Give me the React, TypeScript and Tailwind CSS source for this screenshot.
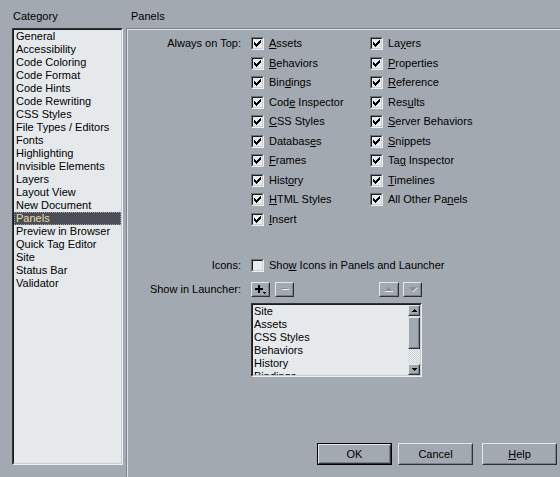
import React from "react";

const CATEGORIES = [
  "General",
  "Accessibility",
  "Code Coloring",
  "Code Format",
  "Code Hints",
  "Code Rewriting",
  "CSS Styles",
  "File Types / Editors",
  "Fonts",
  "Highlighting",
  "Invisible Elements",
  "Layers",
  "Layout View",
  "New Document",
  "Panels",
  "Preview in Browser",
  "Quick Tag Editor",
  "Site",
  "Status Bar",
  "Validator",
];

// "&" marks the mnemonic letter
const LEFT_PANELS = [
  "&Assets",
  "&Behaviors",
  "Bin&dings",
  "Cod&e Inspector",
  "&CSS Styles",
  "Databas&es",
  "&Frames",
  "Hist&ory",
  "&HTML Styles",
  "&Insert",
];

const RIGHT_PANELS = [
  "La&yers",
  "&Properties",
  "&Reference",
  "Res&ults",
  "&Server Behaviors",
  "&Snippets",
  "Ta&g Inspector",
  "&Timelines",
  "All Other Pa&nels",
];

const LAUNCHER = ["Site", "Assets", "CSS Styles", "Behaviors", "History", "Bindings"];

function Mnemonic({ text }: { text: string }) {
  const i = text.indexOf("&");
  if (i < 0) return <>{text}</>;
  return (
    <>
      {text.slice(0, i)}
      <span className="underline underline-offset-[1px]">{text[i + 1]}</span>
      {text.slice(i + 2)}
    </>
  );
}

function CheckBox({ on }: { on: boolean }) {
  return (
    <span className="flex h-[13px] w-[13px] shrink-0 border border-t-[#6a7178] border-l-[#6a7178] border-r-[#eef1f3] border-b-[#eef1f3]">
      <span className="flex flex-1 items-center justify-center border border-t-[#1c1f22] border-l-[#1c1f22] border-r-[#c9ced2] border-b-[#c9ced2] bg-[#e8ecee]">
        {on && (
          <svg width="7" height="7" viewBox="0 0 7 7" shapeRendering="crispEdges">
            <path
              fill="#000"
              d="M6 0h1v1h-1z M5 1h2v1h-2z M0 2h1v1h-1z M4 2h3v1h-3z M0 3h2v1h-2z M3 3h3v1h-3z M0 4h5v1h-5z M1 5h3v1h-3z M2 6h1v1h-1z"
            />
          </svg>
        )}
      </span>
    </span>
  );
}

function CheckRow({ label, on = true }: { label: string; on?: boolean }) {
  return (
    <div className="flex h-[19.5px] items-center gap-[5px]">
      <CheckBox on={on} />
      <span className="whitespace-nowrap">
        <Mnemonic text={label} />
      </span>
    </div>
  );
}

function Raised({
  className = "",
  children,
}: {
  className?: string;
  children?: React.ReactNode;
}) {
  return (
    <div
      className={`flex border border-t-[#e3e7ea] border-l-[#e3e7ea] border-r-[#2e3236] border-b-[#2e3236] ${className}`}
    >
      <div className="flex flex-1 items-center justify-center border border-t-transparent border-l-transparent border-r-[#7a8189] border-b-[#7a8189] bg-[#a2a9b0]">
        {children}
      </div>
    </div>
  );
}

function ScrollBar() {
  return (
    <div className="flex w-[12px] shrink-0 flex-col bg-[#e4e8ea] [background-image:repeating-conic-gradient(#c9cfd3_0_25%,#eef1f3_0_50%)] [background-size:2px_2px]">
      <Raised className="h-[11px] w-[12px]">
        <svg width="5" height="3" viewBox="0 0 5 3" shapeRendering="crispEdges">
          <path fill="#000" d="M2 0h1v1h-1z M1 1h3v1h-3z M0 2h5v1h-5z" />
        </svg>
      </Raised>
      <Raised className="mt-px h-[32px] w-[12px]" />
      <div className="flex-1" />
      <Raised className="h-[11px] w-[12px]">
        <svg width="5" height="3" viewBox="0 0 5 3" shapeRendering="crispEdges">
          <path fill="#000" d="M0 0h5v1h-5z M1 1h3v1h-3z M2 2h1v1h-1z" />
        </svg>
      </Raised>
    </div>
  );
}

export default function App() {
  return (
    <div className="flex h-[477px] w-[560px] overflow-hidden bg-[#a2a9b0] text-[11px] leading-[13px] text-black [font-family:'Liberation_Sans',Arial,sans-serif]">
      {/* category list */}
      <div className="flex w-[126px] shrink-0 flex-col pl-3">
        <div className="h-[28px] pl-px pt-[10px]">Category</div>
        <div className="h-[437px] w-[111px] border border-t-[#30343a] border-l-[#30343a] border-r-[#eef1f3] border-b-[#eef1f3]">
          <div className="h-full border border-t-[#1a1c1f] border-l-[#1a1c1f] border-r-[#c8cdd1] border-b-[#c8cdd1] bg-[#e5e9eb]">
            {CATEGORIES.map((c) =>
              c === "Panels" ? (
                <div
                  key={c}
                  className="h-[13px] border border-dotted border-[#9a9ca4] bg-[#4c4e57] pl-px leading-[11px] text-[#eadca4]"
                >
                  {c}
                </div>
              ) : (
                <div key={c} className="h-[13px] whitespace-nowrap pl-[2px]">
                  {c}
                </div>
              )
            )}
          </div>
        </div>
      </div>

      {/* settings panel */}
      <div className="flex flex-1 flex-col">
        <div className="h-[28px] pl-[5px] pt-[10px]">Panels</div>
        <div className="flex flex-1 flex-col border-t border-l border-[#7f868d]">
          <div className="flex flex-1 flex-col border-t border-l border-[#dde1e4]">
            <div className="flex pt-[4px]">
              <div className="flex h-[19.5px] w-[113px] items-center justify-end">Always on Top:</div>
              <div className="ml-[10px] flex">
                <div className="flex w-[119px] flex-col">
                  {LEFT_PANELS.map((p) => (
                    <CheckRow key={p} label={p} />
                  ))}
                </div>
                <div className="flex flex-col">
                  {RIGHT_PANELS.map((p) => (
                    <CheckRow key={p} label={p} />
                  ))}
                </div>
              </div>
            </div>

            <div className="mt-[26.5px] flex">
              <div className="flex h-[19.5px] w-[113px] items-center justify-end">Icons:</div>
              <div className="ml-[10px]">
                <CheckRow label="Sho&w Icons in Panels and Launcher" on={false} />
              </div>
            </div>

            <div className="mt-[7px] flex">
              <div className="flex h-[15px] w-[113px] items-center justify-end">Show in Launcher:</div>
              <div className="ml-[10px] flex w-[171px] flex-col">
                <div className="flex h-[15px] items-stretch">
                  <Raised className="w-[19px]">
                    <svg width="11" height="10" viewBox="0 0 11 10" shapeRendering="crispEdges">
                      <path fill="#000" d="M3 0h2v8h-2z M0 3h8v2h-8z M8 7h3v1h-3z M9 8h1v1h-1z" />
                    </svg>
                  </Raised>
                  <Raised className="ml-[5px] w-[19px]">
                    <svg width="8" height="3" viewBox="0 0 8 3" shapeRendering="crispEdges">
                      <path fill="#8a9097" d="M0 0h7v1h-7z" />
                      <path fill="#eef1f3" d="M1 1h7v1h-7z" />
                    </svg>
                  </Raised>
                  <div className="flex-1" />
                  <Raised className="w-[20px]">
                    <svg width="10" height="6" viewBox="0 0 10 6" shapeRendering="crispEdges">
                      <path fill="#8a9097" d="M4 0h1v1h-1z M3 1h3v1h-3z M2 2h5v1h-5z M1 3h7v1h-7z" />
                      <path fill="#eef1f3" d="M1 4h8v1h-8z" />
                    </svg>
                  </Raised>
                  <Raised className="ml-[4px] w-[19px]">
                    <svg width="10" height="6" viewBox="0 0 10 6" shapeRendering="crispEdges">
                      <path fill="#8a9097" d="M1 0h7v1h-7z M2 1h5v1h-5z M3 2h3v1h-3z M4 3h1v1h-1z" />
                      <path fill="#eef1f3" d="M8 1h1v1h-1z M7 2h1v1h-1z M6 3h1v1h-1z M5 4h1v1h-1z" />
                    </svg>
                  </Raised>
                </div>
                <div className="mt-[6px] h-[74px] border border-t-[#30343a] border-l-[#30343a] border-r-[#eef1f3] border-b-[#eef1f3]">
                  <div className="flex h-full border border-t-[#1a1c1f] border-l-[#1a1c1f] border-r-[#c8cdd1] border-b-[#c8cdd1] bg-[#e5e9eb]">
                    <div className="flex-1 overflow-hidden pl-px">
                      {LAUNCHER.map((l) => (
                        <div key={l} className="h-[13px] whitespace-nowrap">
                          {l}
                        </div>
                      ))}
                    </div>
                    <ScrollBar />
                  </div>
                </div>
              </div>
            </div>

            <div className="mt-auto flex justify-end pb-[12px] pr-[3px]">
              <div className="h-[22px] w-[75px] border border-black">
                <Raised className="h-full">OK</Raised>
              </div>
              <Raised className="ml-[6px] h-[22px] w-[75px]">Cancel</Raised>
              <Raised className="ml-[9px] h-[22px] w-[75px]">
                <Mnemonic text="&Help" />
              </Raised>
            </div>
          </div>
        </div>
      </div>
    </div>
  );
}
